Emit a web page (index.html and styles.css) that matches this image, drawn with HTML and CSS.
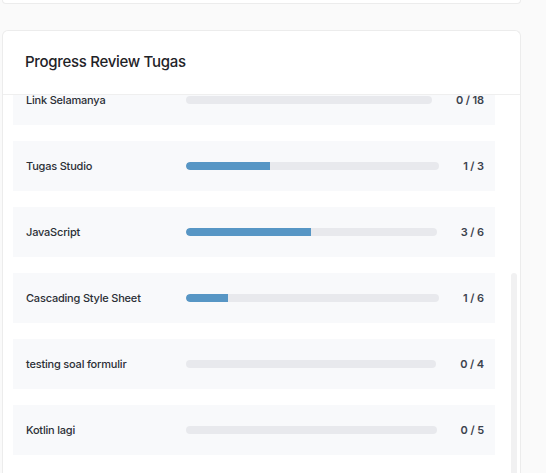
FILE: index.html
```html
<!DOCTYPE html>
<html lang="id">
<head>
<meta charset="utf-8">
<title>Progress Review Tugas</title>
<link rel="stylesheet" href="styles.css">
</head>
<body>
<div class="page">
  <div class="top-card"></div>
  <section class="card">
    <header class="card-header">
      <h2 class="card-title">Progress Review Tugas</h2>
    </header>
    <div class="card-body">
      <div class="list-viewport">
        <div class="list">
          <div class="row"><span class="name">Link Selamanya</span><div class="track"><div class="fill" style="width:0%"></div></div><span class="count">0 / 18</span></div>
          <div class="row"><span class="name">Tugas Studio</span><div class="track"><div class="fill" style="width:33.33%"></div></div><span class="count">1 / 3</span></div>
          <div class="row"><span class="name">JavaScript</span><div class="track"><div class="fill" style="width:50%"></div></div><span class="count">3 / 6</span></div>
          <div class="row"><span class="name">Cascading Style Sheet</span><div class="track"><div class="fill" style="width:16.67%"></div></div><span class="count">1 / 6</span></div>
          <div class="row"><span class="name">testing soal formulir</span><div class="track"><div class="fill" style="width:0%"></div></div><span class="count">0 / 4</span></div>
          <div class="row"><span class="name">Kotlin lagi</span><div class="track"><div class="fill" style="width:0%"></div></div><span class="count">0 / 5</span></div>
        </div>
      </div>
      <div class="scrollbar"><div class="thumb"></div></div>
    </div>
  </section>
</div>
</body>
</html>
```
FILE: styles.css
```css
* { box-sizing: border-box; }
html, body { margin: 0; padding: 0; }
body {
  background: #fafafa;
  font-family: Inter, "Noto Sans", sans-serif;
  color: #2b2f36;
}
.page {
  padding-left: 2px;
  width: 521px;
}
.top-card {
  height: 4px;
  background: #fff;
  border: 1px solid #ececec;
  border-top: none;
  border-radius: 0 0 6px 6px;
}
.card {
  margin-top: 26px;
  background: #fff;
  border: 1px solid #ececec;
  border-bottom: none;
  border-radius: 6px 6px 0 0;
  height: 443px;
  overflow: hidden;
  display: flex;
  flex-direction: column;
}
.card-header {
  flex: 0 0 64px;
  border-bottom: 1px solid #efefef;
  display: flex;
  align-items: center;
  padding: 0 22px;
}
.card-title {
  margin: 0;
  font-size: 15px;
  font-weight: 500;
  letter-spacing: -0.3px;
  color: #1f2328;
  padding-bottom: 2px;
}
.card-body {
  flex: 1;
  min-height: 0;
  display: flex;
  padding-right: 3px;
}
.list-viewport {
  flex: 1;
  overflow: hidden;
  padding: 0 16px 0 10px;
}
.list {
  margin-top: -20px;
  display: flex;
  flex-direction: column;
  gap: 16px;
}
.row {
  flex: 0 0 50px;
  height: 50px;
  background: #f8f9fb;
  display: flex;
  align-items: center;
  padding: 0 11px 0 13px;
}
.name {
  flex: 0 0 160px;
  font-size: 11px;
  font-weight: 500;
  letter-spacing: -0.2px;
  color: #2b2f36;
}
.track {
  flex: 1;
  height: 8px;
  border-radius: 4px;
  background: #e8e9ed;
  overflow: hidden;
}
.fill {
  height: 100%;
  background: #5796c5;
  border-radius: 4px 0 0 4px;
}
.count {
  margin-left: 24px;
  font-size: 11px;
  font-weight: 600;
  color: #3c424d;
  letter-spacing: -0.1px;
}
.scrollbar {
  flex: 0 0 6px;
  overflow: hidden;
}
.thumb {
  margin-top: 178px;
  height: 260px;
  background: #f1f1f2;
  border-radius: 3px;
}
```
